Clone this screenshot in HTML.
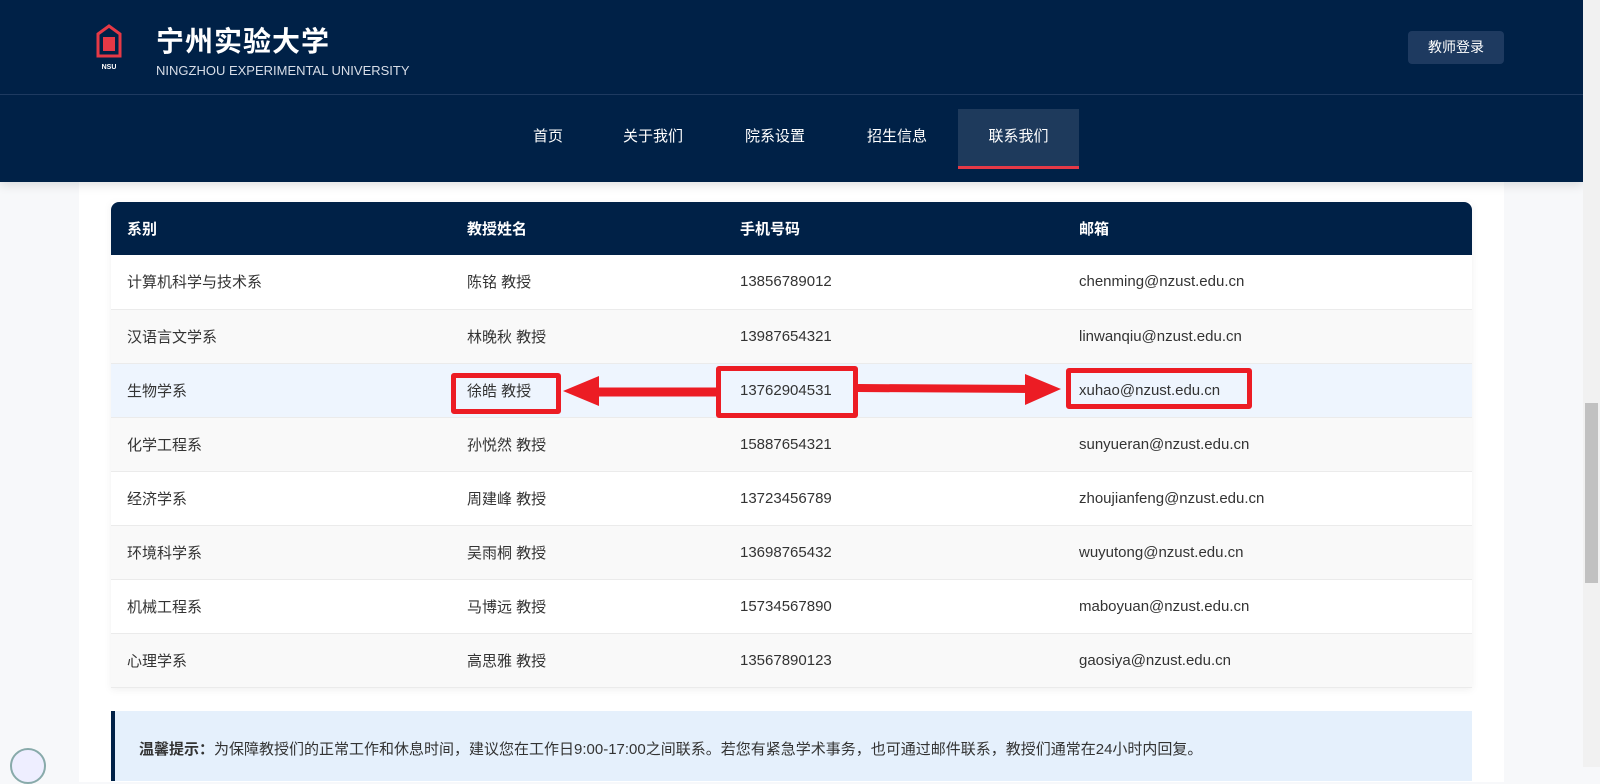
<!DOCTYPE html>
<html><head><meta charset="utf-8"><style>
*{margin:0;padding:0;box-sizing:border-box}
body{width:1600px;height:767px;overflow:hidden;background:#f7f8fa;font-family:"Liberation Sans","Noto Sans CJK SC",sans-serif;position:relative}
.page{position:absolute;left:0;top:0;width:1583px;height:767px;background:#f7f8fa}
.wrap{position:absolute;left:79px;top:182px;width:1425px;height:600px;background:#fff}
.hdr{position:absolute;left:0;top:0;width:1583px;height:182px;background:#002147;box-shadow:0 3px 10px rgba(0,0,0,.12)}
.line{position:absolute;left:0;top:94px;width:1583px;height:1px;background:#1e3a60}
.title{position:absolute;left:156px;top:20px;color:#fff;font-size:28px;font-weight:bold;font-family:"Noto Sans CJK SC",sans-serif;letter-spacing:1px}
.sub{position:absolute;left:156px;top:63px;color:#d8dee8;font-size:13px}
.btn{position:absolute;left:1408px;top:31px;width:96px;height:33px;background:#1e3a60;border-radius:4px;color:#fff;font-size:14px;text-align:center;line-height:33px}
.nav{position:absolute;top:109px;height:60px;color:#fff;font-size:15px;line-height:56px;text-align:center}
.act{background:#1e3a5c;border-bottom:3px solid #e63946}
table{position:absolute;left:111px;top:202px;width:1361px;border-collapse:collapse;font-size:15px;color:#333;box-shadow:0 2px 8px rgba(0,0,0,.06)}
th{background:#002147;color:#fff;text-align:left;height:53px;font-weight:bold;padding-left:16px}
th:first-child{border-top-left-radius:8px}th:last-child{border-top-right-radius:8px}
td{height:54px;padding-left:16px;border-bottom:1px solid #ebebeb;background:#fff}
tr:nth-child(odd) td{background:#f9f9f9}
tr.hl td{background:#eef5fe}
.tip{position:absolute;left:111px;top:711px;width:1361px;height:70px;background:#e5f0fc;border-left:4px solid #002147;padding:27px 0 0 24px;font-size:15px;color:#333}
.sb{position:absolute;left:1583px;top:0;width:17px;height:767px;background:#f1f1f1}
.th{position:absolute;left:1585px;top:403px;width:13px;height:180px;background:#c1c1c1}
.box{position:absolute;border:5px solid #ec1c24;border-radius:3px}
</style></head><body>
<div class="page">
<div class="wrap"></div>
<div class="hdr">
<svg style="position:absolute;left:96px;top:24px" width="26" height="48" viewBox="0 0 26 48"><path d="M2 10 L13 2 L24 10 V32 H2 Z" fill="none" stroke="#e63946" stroke-width="3"/><rect x="7" y="13" width="12" height="14" fill="#e63946"/><text x="13" y="45" fill="#fff" font-size="7" font-weight="bold" text-anchor="middle" font-family="Liberation Sans">NSU</text></svg>
<div class="title">宁州实验大学</div>
<div class="sub">NINGZHOU EXPERIMENTAL UNIVERSITY</div>
<div class="btn">教师登录</div>
<div class="line"></div>
<div class="nav" style="left:518px;width:60px">首页</div>
<div class="nav" style="left:613px;width:80px">关于我们</div>
<div class="nav" style="left:735px;width:80px">院系设置</div>
<div class="nav" style="left:857px;width:80px">招生信息</div>
<div class="nav act" style="left:958px;width:121px">联系我们</div>
</div>
<table>
<tr><th style="width:340px">系别</th><th style="width:273px">教授姓名</th><th style="width:339px">手机号码</th><th>邮箱</th></tr>
<tr><td>计算机科学与技术系</td><td>陈铭 教授</td><td>13856789012</td><td>chenming@nzust.edu.cn</td></tr>
<tr><td>汉语言文学系</td><td>林晚秋 教授</td><td>13987654321</td><td>linwanqiu@nzust.edu.cn</td></tr>
<tr class="hl"><td>生物学系</td><td>徐皓 教授</td><td>13762904531</td><td>xuhao@nzust.edu.cn</td></tr>
<tr><td>化学工程系</td><td>孙悦然 教授</td><td>15887654321</td><td>sunyueran@nzust.edu.cn</td></tr>
<tr><td>经济学系</td><td>周建峰 教授</td><td>13723456789</td><td>zhoujianfeng@nzust.edu.cn</td></tr>
<tr><td>环境科学系</td><td>吴雨桐 教授</td><td>13698765432</td><td>wuyutong@nzust.edu.cn</td></tr>
<tr><td>机械工程系</td><td>马博远 教授</td><td>15734567890</td><td>maboyuan@nzust.edu.cn</td></tr>
<tr><td>心理学系</td><td>高思雅 教授</td><td>13567890123</td><td>gaosiya@nzust.edu.cn</td></tr>
</table>
<div class="tip"><b>温馨提示：</b>为保障教授们的正常工作和休息时间，建议您在工作日9:00-17:00之间联系。若您有紧急学术事务，也可通过邮件联系，教授们通常在24小时内回复。</div>
<div class="box" style="left:451px;top:373px;width:110px;height:41px"></div>
<div class="box" style="left:716px;top:366px;width:142px;height:52px"></div>
<div class="box" style="left:1066px;top:368px;width:186px;height:41px"></div>
<svg style="position:absolute;left:0;top:0" width="1583" height="767"><path d="M716 392 L597 392" stroke="#ec1c24" stroke-width="9"/><path d="M563 391 L599 376 L599 406 Z" fill="#ec1c24"/><path d="M858 388 L1028 389" stroke="#ec1c24" stroke-width="8"/><path d="M1061 389 L1025 374 L1025 405 Z" fill="#ec1c24"/></svg>
<div style="position:absolute;left:10px;top:748px;width:36px;height:36px;border-radius:50%;border:2px solid #8aa;background:#eef"></div>
</div>
<div class="sb"></div><div class="th"></div>
</body></html>
